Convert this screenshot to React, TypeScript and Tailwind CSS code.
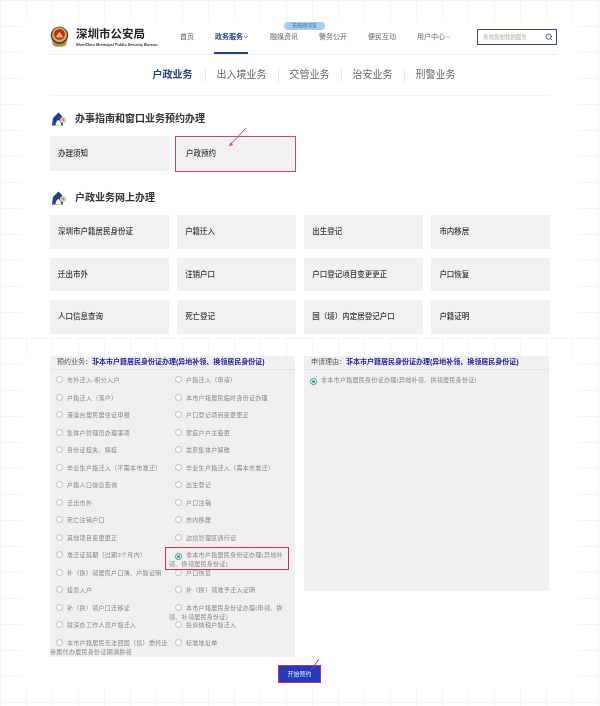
import React from "react";
import { ChevronDown, Search } from "lucide-react";

const NAV = ["融媒资讯", "警务公开", "便民互动"];
const TABS = ["出入境业务", "交管业务", "治安业务", "刑警业务"];

const ONLINE = [
  "深圳市户籍居民身份证",
  "户籍迁入",
  "出生登记",
  "市内移居",
  "迁出市外",
  "注销户口",
  "户口登记项目变更更正",
  "户口恢复",
  "人口信息查询",
  "死亡登记",
  "国（境）内定居登记户口",
  "户籍证明",
];

const OPTIONS = [
  "市外迁入-积分入户",
  "户籍迁入（申请）",
  "户籍迁入（落户）",
  "本市户籍居民临时身份证办理",
  "港澳台居民居住证申报",
  "户口登记项目变更更正",
  "集体户管理员办理事项",
  "家庭户户主变更",
  "身份证挂失、解挂",
  "类原集体户解散",
  "毕业生户籍迁入（不需本市准迁）",
  "毕业生户籍迁入（需本市准迁）",
  "户籍人口信息查询",
  "出生登记",
  "迁出市外",
  "户口注销",
  "死亡注销户口",
  "市内移居",
  "其他项目变更更正",
  "边境管理区通行证",
  "准迁证延期（过期3个月内）",
  "非本市户籍居民身份证办理(异地补领、换领居民身份证)",
  "补（换）领居民户口簿、户籍证明",
  "户口恢复",
  "挂靠入户",
  "补（换）领准予迁入证明",
  "补（换）领户口迁移证",
  "本市户籍居民身份证办理(申领、换领、补领居民身份证)",
  "驻深办工作人员户籍迁入",
  "投资纳税户籍迁入",
  "本市户籍居民无法回国（境）委托近亲属代办居民身份证期满换领",
  "标准地址单",
];

const SELECTED = 21;

const gridLines =
  "bg-[linear-gradient(90deg,#f4f4f4_1px,transparent_1px),linear-gradient(#f4f4f4_1px,transparent_1px)] bg-[size:26px_26px]";

function Emblem() {
  return (
    <svg width="19" height="22" viewBox="0 0 21 25" className="shrink-0">
      <path d="M2 16 Q1 23 7 24 L14 24 Q20 23 19 16 Z" fill="#cfb064" />
      <circle cx="10.5" cy="10.5" r="10" fill="#3b3f55" />
      <circle cx="10.5" cy="10" r="8.5" fill="#d8ae45" />
      <circle cx="10.5" cy="9.5" r="6.2" fill="#c8232c" />
      <path d="M7 11 L10.5 6.5 L14 11 L14 13 L7 13 Z" fill="#ecca60" />
      <path d="M4 20 Q10.5 24 17 20" stroke="#a9822f" strokeWidth="1.5" fill="none" />
    </svg>
  );
}

function HouseIcon() {
  return (
    <svg width="14" height="14" viewBox="0 0 14 14" className="shrink-0">
      <path d="M0 13.5 L1 6 L6.5 0.5 L10 4 L11 13.5 Z" fill="#1c3f8f" />
      <path d="M3.5 13.5 Q3.5 8.5 7 8 Q9 10 9.5 13.5 Z" fill="#fff" />
      <circle cx="11" cy="8" r="3" fill="#e6c98a" />
      <path d="M11 6.5 L11 8 L12.2 8.6" stroke="#1c3f8f" strokeWidth="0.6" fill="none" />
    </svg>
  );
}

function SectionTitle({ children }: { children: React.ReactNode }) {
  return (
    <div className="flex items-center gap-[9px] pl-[2px] text-[10px] leading-[14px] font-bold text-[#333]">
      <HouseIcon />
      {children}
    </div>
  );
}

function Radio({ on }: { on?: boolean }) {
  return (
    <span
      className={`mr-[4px] inline-flex h-[7px] w-[7px] items-center justify-center rounded-full border-[0.75px] align-[-1px] bg-white ${
        on ? "border-[#16a085]" : "border-[#bbb]"
      }`}
    >
      {on && <span className="h-[3px] w-[3px] rounded-full bg-[#16a085]" />}
    </span>
  );
}

function PanelHeading({ label }: { label: string }) {
  return (
    <div className="flex h-[14px] items-center border-b border-[#d6e6f4] pl-[7px] text-[7px] whitespace-nowrap">
      <span className="text-[#555]">{label}：</span>
      <span className="font-bold text-[#1c1c9e]">非本市户籍居民身份证办理(异地补领、换领居民身份证)</span>
    </div>
  );
}

export default function App() {
  return (
    <div className={`relative flex h-[706px] w-[600px] flex-col overflow-hidden bg-white blur-[0.4px] font-['Liberation_Sans','Noto_Sans_CJK_SC',sans-serif] ${gridLines}`}>
      <div className="h-[20px] shrink-0" />

      <main className="mx-[22px] bg-white px-[28px] pb-[4.5px]">
        {/* top nav */}
        <header className="relative -mr-[7px] flex h-[35px] items-center border-b border-[#eee] text-[7px] whitespace-nowrap text-[#666]">
          <div className="flex w-[130px] shrink-0 items-center gap-[7px]">
            <Emblem />
            <div>
              <div className="text-[11.5px] leading-[14px] font-bold text-[#222]">深圳市公安局</div>
              <div className="mt-[1.5px] text-[3.9px] leading-[5px] font-bold whitespace-nowrap text-[#333]">
                ShenZhen Municipal Public Security Bureau
              </div>
            </div>
          </div>
          <div className="flex w-[267px] shrink-0 items-center gap-[21px]">
            <span>首页</span>
            <span className="flex items-center font-bold text-[#2b4a8c]">
              政务服务
              <ChevronDown size={6} strokeWidth={3} />
            </span>
            {NAV.map((n) => (
              <span key={n}>{n}</span>
            ))}
            <span className="flex items-center">
              用户中心
              <ChevronDown size={6} />
            </span>
          </div>
          <div className="ml-[30px] flex h-[16px] w-[80px] shrink-0 items-center justify-between border border-[#3a4a6b] pr-[3px] pl-[5px] text-[5.5px] text-[#aaa]">
            查询您想找的服务
            <Search size={8} strokeWidth={2.5} className="text-[#3a4a6b]" />
          </div>
          <span className="absolute top-[2px] left-[234px] flex h-[8px] w-[41px] items-center justify-center rounded-full bg-[#a9cdf0] text-[5px] text-[#3b6db0]">
            无障碍浏览
          </span>
          <span className="absolute bottom-0 left-[164px] h-[2px] w-[34px] bg-[#23407f]" />
        </header>

        {/* business tabs */}
        <nav className="flex h-[41px] items-start justify-center border-b border-[#f2f2f2] pt-[13px] pl-[19px] text-[10px] leading-[14px] text-[#666]">
          <span className="pr-[12px] font-bold text-[#23407f]">户政业务</span>
          {TABS.map((t) => (
            <span key={t} className="border-l border-[#e8e8e8] px-[11px]">
              {t}
            </span>
          ))}
        </nav>

        <section className="pt-[16px]">
          <SectionTitle>办事指南和窗口业务预约办理</SectionTitle>
          <div className="mt-[10px] flex gap-[6px] text-[7.5px] font-medium text-[#333]">
            <div className="flex h-[35px] w-[119px] items-center bg-[#f1f1f1] pl-[8px]">办理须知</div>
            <div className="flex h-[36px] w-[121px] items-center border-[1.5px] border-[#c9475a] bg-[#f1f1f1] pl-[10px]">户政预约</div>
          </div>
        </section>

        <section className="pt-[19px]">
          <SectionTitle>户政业务网上办理</SectionTitle>
          <div className="mt-[10px] grid grid-cols-4 gap-x-[8.5px] gap-y-[9px] text-[7.5px] font-medium text-[#333]">
            {ONLINE.map((t) => (
              <div key={t} className="flex h-[33.5px] items-center bg-[#f1f1f1] pl-[8px]">
                {t}
              </div>
            ))}
          </div>
        </section>
      </main>

      <div className="h-[18px] shrink-0" />

      <main className="relative mx-[22px] flex-1 bg-white px-[28px]">
        <div className="flex items-start gap-[9px]">
          {/* service list */}
          <div className="h-[301px] w-[245px] bg-[#f0f0f0]">
            <PanelHeading label="预约业务" />
            <div className="grid grid-cols-[119px_126px] auto-rows-[17.5px] pt-[1px] text-[6px] leading-[9px] tracking-[0.3px] text-[#888]">
              {OPTIONS.map((o, i) => (
                <div key={o} className="pt-[5px] [text-indent:6px]">
                  <Radio on={i === SELECTED} />
                  {o}
                </div>
              ))}
            </div>
          </div>

          {/* reason */}
          <div className="h-[235px] w-[245px] bg-[#f0f0f0]">
            <PanelHeading label="申请理由" />
            <div className="pt-[6px] pl-[6px] text-[6px] leading-[9px] tracking-[0.3px] whitespace-nowrap text-[#888]">
              <Radio on />
              非本市户籍居民身份证办理(异地补领、换领居民身份证)
            </div>
          </div>
        </div>

        <div className="flex justify-center pt-[8px] pr-[1px]">
          <button className="h-[18px] w-[43px] border-[1.5px] border-[#b5395a] bg-[#2438c0] text-[6px] text-[#dfe4ff]">
            开始预约
          </button>
        </div>

        {/* red mark around the selected option */}
        <span className="absolute top-[191px] left-[143px] h-[23px] w-[124px] border-[1.5px] border-[#c9334a]" />
      </main>

      <div className="h-[16px] shrink-0" />

      {/* hand drawn arrows */}
      <svg className="absolute inset-0" width="600" height="706" fill="none">
        <path d="M246 128 L229 146" stroke="#c9475a" strokeWidth="1" />
        <path d="M229 146 L231 142 L233 145 Z" fill="#c9475a" />
        <path d="M319 659 L311 670" stroke="#b5395a" strokeWidth="1" />
      </svg>
    </div>
  );
}
